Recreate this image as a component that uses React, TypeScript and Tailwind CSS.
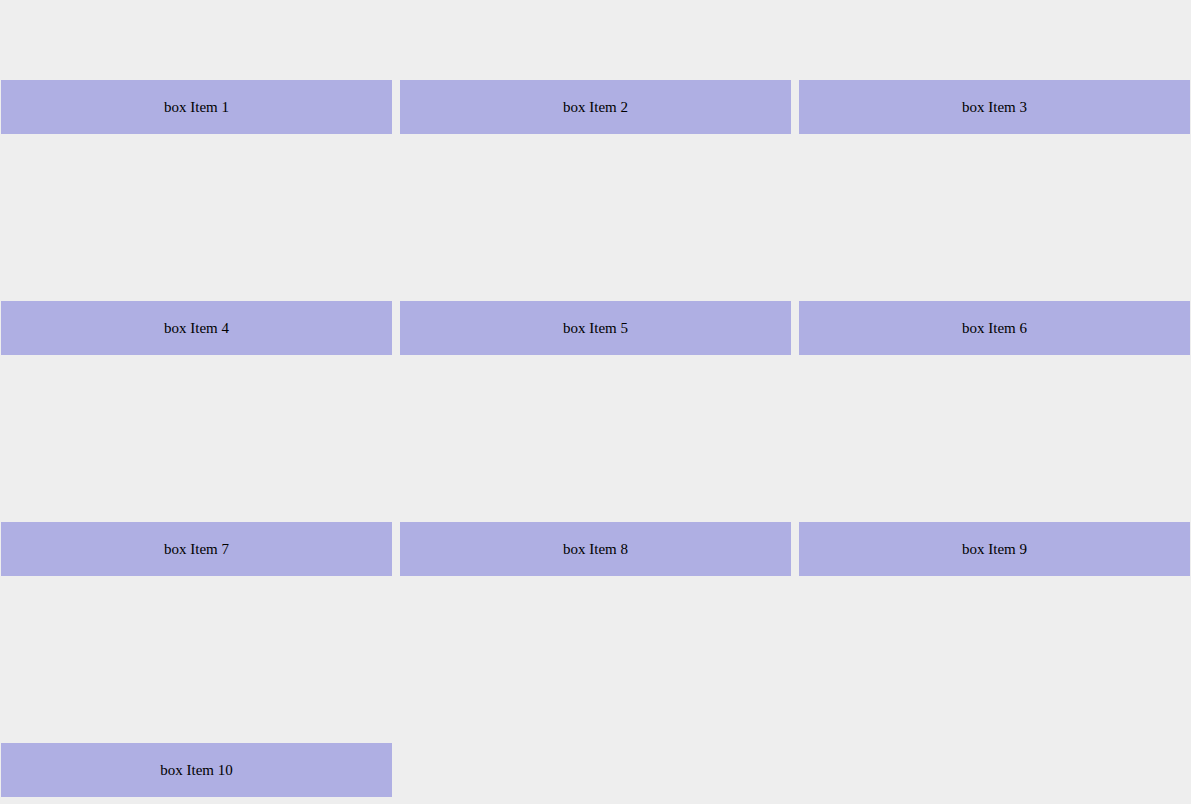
export default function App() {
  const items = Array.from({ length: 10 }, (_, i) => i + 1);

  return (
    <div className="min-h-screen bg-[#eeeeee] px-[1px] pt-[80px] pb-[7px]">
      <div className="grid grid-cols-[391px_391px_391px] gap-x-[8px] gap-y-[167px]">
        {items.map((n) => (
          <div
            key={n}
            className="flex h-[54px] items-center justify-center bg-[#afafe3] text-[15px] text-black"
            style={{ fontFamily: '"Liberation Serif", "Times New Roman", serif' }}
          >
            box Item {n}
          </div>
        ))}
      </div>
    </div>
  );
}
